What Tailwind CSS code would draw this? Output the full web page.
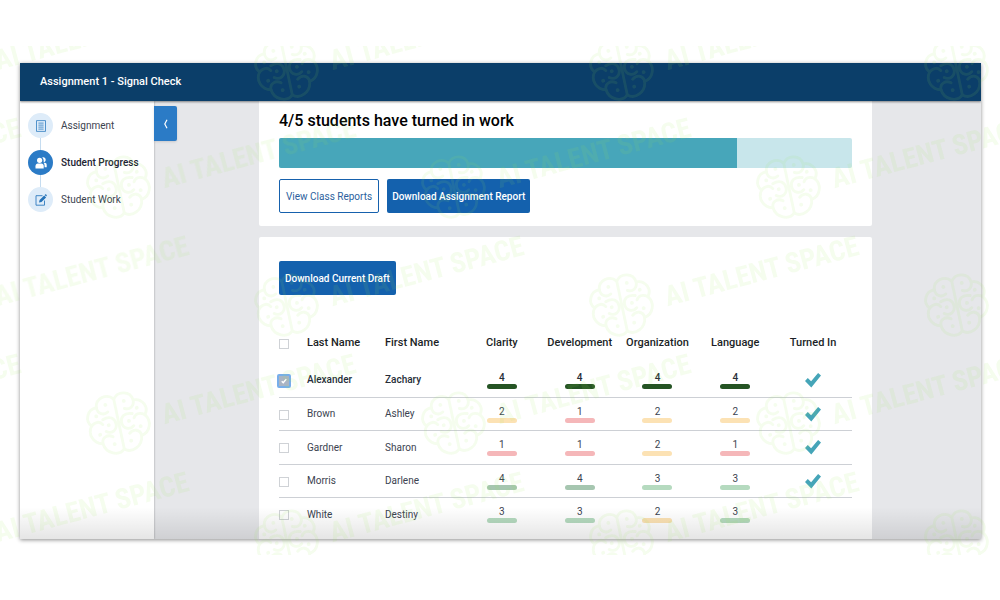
<!DOCTYPE html>
<html lang="en">
<head>
<meta charset="utf-8">
<title>Assignment 1 - Signal Check</title>
<meta name="viewport" content="width=device-width, initial-scale=1">
<script src="https://cdn.jsdelivr.net/npm/@tailwindcss/browser@4"></script>
</head>
<body class="relative min-h-screen overflow-hidden bg-white px-5 pt-[63px] font-['Roboto',sans-serif] text-[#3b4350]">

<div class="mr-[-1px] flex h-[476px] flex-col overflow-hidden bg-[#e6e7ea] shadow-[0_1px_4px_rgba(0,0,0,0.45)]">
  <header class="relative z-10 flex h-[38px] shrink-0 items-center bg-[#0b3e69] px-5 shadow-[0_1px_2px_rgba(0,0,0,0.45)]">
    <h1 class="text-[11px] font-medium text-white">Assignment 1 - Signal Check</h1>
  </header>

  <div class="relative flex min-h-0 flex-1">
    <nav class="w-[134px] shrink-0 bg-white shadow-[0_0_2px_rgba(0,0,0,0.35)]" aria-label="Assignment steps">
      <ul class="flex flex-col px-2 pt-3 text-[10px]">
        <li><a href="#assignment" class="flex items-center gap-2">
          <span class="flex size-[25px] items-center justify-center rounded-full bg-[#deecf9]">
            <svg class="size-3" viewBox="0 0 12 12" fill="none" stroke="#2f7cc0"><path d="M1.500.600h9v10.800h-9zM3.400 3.100h5.200M3.400 5.100h5.200M3.400 7.100h5.200M3.400 9.100h5.200" stroke-width=".8"/></svg>
          </span>Assignment</a></li>
        <li class="ml-3 h-3 w-px bg-[#c5dcf0]"></li>
        <li><a href="#progress" class="flex items-center gap-2 font-medium text-[#1c2433]">
          <span class="flex size-[25px] items-center justify-center rounded-full bg-[#2b7bc6]">
            <svg class="size-3" viewBox="0 0 12 12" fill="#fff"><circle cx="4.600" cy="3.300" r="2.600"/><path d="M.5 11.600V9.200c0-1.700 1-2.700 2.300-2.700h3.600c1.400 0 2.300 1 2.300 2.700v2.400z"/><path d="M7.200.600c1.700-.8 3.500.3 3.500 2.100 0 1.300-.9 2.300-2.100 2.400.3-1.600-.1-3.300-1.400-4.500zM8.700 5.700h1c1.200 0 2 .9 2 2.200v2.300H9.600V8.700c0-1.200-.4-2.300-1.200-2.900z"/></svg>
          </span>Student Progress</a></li>
        <li class="ml-3 h-3 w-px bg-[#c5dcf0]"></li>
        <li><a href="#work" class="flex items-center gap-2">
          <span class="flex size-[25px] items-center justify-center rounded-full bg-[#deecf9]">
            <svg class="size-3" viewBox="0 0 12 12"><path d="M7.500 1.700H1v9.500h8.500V6.500" fill="none" stroke="#2f7cc0" stroke-width=".9"/><path d="M4 8.600l.6-2.600 4.600-4.500 1.900 1.900-4.600 4.500zM9.700 1l.6-.6c.5-.5 1.900.8 1.400 1.400l-.6.700z" fill="#2472b8"/></svg>
          </span>Student Work</a></li>
      </ul>
    </nav>

    <button type="button" aria-label="Collapse menu" class="mt-[5px] flex h-[35px] w-[23px] shrink-0 items-center justify-center rounded-r-xs bg-[#2b7bc6] shadow-sm">
      <svg class="h-2.5 w-1.5" viewBox="0 0 6 10" fill="none" stroke="#fff" stroke-width="1.200"><path d="M4 .8 1.800 5 4 9.200"/></svg>
    </button>

    <main class="ml-[82px] mr-[109px] flex min-w-0 flex-1 flex-col gap-[11px] overflow-hidden">
      <section class="shrink-0 rounded-b-xs bg-white px-5 pt-2.5 pb-[13px]">
        <h2 class="text-base leading-5 font-medium text-black">4/5 students have turned in work</h2>
        <div role="progressbar" aria-label="Work turned in" aria-valuenow="4" aria-valuemin="0" aria-valuemax="5" class="mt-[7px] h-[30px] overflow-hidden rounded-xs bg-[#c8e6eb]">
          <div class="h-full bg-[#47a6ba]" style="width:80%"></div>
        </div>
        <div class="mt-[11px] flex gap-2 text-[10px]">
          <button type="button" class="h-[34px] rounded-xs border border-[#1661ad] bg-white px-1.5 text-[#2c5f9e]">View Class Reports</button>
          <button type="button" class="h-[34px] rounded-xs bg-[#1461ad] px-[5px] font-medium text-white">Download Assignment Report</button>
        </div>
      </section>

      <section class="min-h-0 flex-1 rounded-t-xs bg-white px-5 pt-6">
        <button type="button" class="h-[34px] rounded-xs bg-[#1461ad] px-1.5 text-[10px] font-medium text-white">Download Current Draft</button>
        <table class="mt-[30px] w-full table-fixed border-collapse text-left text-[10px]">
          <colgroup><col class="w-7"><col class="w-[78px]"><col class="w-[78px]"><col><col><col><col><col></colgroup>
          <thead>
            <tr class="h-[38px] align-top text-[11px] text-[#1c1f26] [&>th]:pt-2.5 [&>th]:font-medium">
              <th scope="col"><input type="checkbox" aria-label="Select all" class="mt-1 block size-2.5 appearance-none border border-[#cfd2d6]"></th>
              <th scope="col">Last Name</th><th scope="col">First Name</th>
              <th scope="col" class="text-center">Clarity</th><th scope="col" class="text-center">Development</th><th scope="col" class="text-center">Organization</th><th scope="col" class="text-center">Language</th><th scope="col" class="text-center">Turned In</th>
            </tr>
          </thead>
          <tbody id="rows"></tbody>
        </table>
      </section>
    </main>
    <div class="pointer-events-none absolute inset-x-0 bottom-0 h-8 bg-linear-to-b from-transparent to-black/10"></div>
  </div>
</div>

<svg class="pointer-events-none absolute inset-x-0 top-[46px] z-20 h-[509px] w-full" aria-hidden="true">
  <defs>
    <g id="brain" fill="none" stroke="#9be552" stroke-width="3" stroke-linecap="round" stroke-linejoin="round" transform="rotate(-12) scale(.94)">
      <path d="M0-27C-6-35-19-32-20-22-30-22-35-11-29-4-35 4-31 15-21 17-20 28-7 34 0 27 7 34 20 28 21 17 31 15 35 4 29-4 35-11 30-22 20-22 19-32 6-35 0-27Z"/>
      <path d="M0-27V27M-20-22C-20-15-14-12-9-15M-29-4C-24-8-19-7-17-3M-16-8C-8-11-3-7-3-1-3 6-10 9-15 5M-21 17C-21 10-14 8-9 12M20-22C20-15 14-12 9-15M29-4C24-8 19-7 17-3M16-8C8-11 3-7 3-1 3 6 10 9 15 5M21 17C21 10 14 8 9 12"/>
      <path d="M-10-23h.1M-22-13h.1M-11-1h.1M-22 7h.1M-9 20h.1M10-23h.1M22-13h.1M11-1h.1M22 7h.1M9 20h.1" stroke-width="4"/>
    </g>
    <g id="mark">
      <use href="#brain"/>
      <text x="44" y="12" transform="rotate(-15)" fill="#9be552" font-family="'Roboto Condensed','Open Sans Condensed','Liberation Sans',sans-serif" font-weight="700" font-size="28">AI TALENT SPACE</text>
    </g>
  </defs>
  <g id="marks" opacity=".1"></g>
</svg>

<script>
  const bars = { dark: 'bg-[#255424]', 4: 'bg-[#a6c6b0]', 3: 'bg-[#b5dabf]', 2: 'bg-[#fce2b4]', 1: 'bg-[#f5b7b9]' };
  const students = [
    ['Alexander', 'Zachary', [4, 4, 4, 4], true],
    ['Brown', 'Ashley', [2, 1, 2, 2], true],
    ['Gardner', 'Sharon', [1, 1, 2, 1], true],
    ['Morris', 'Darlene', [4, 4, 3, 3], true],
    ['White', 'Destiny', [3, 3, 2, 3], false]
  ];
  const tick = '<svg role="img" aria-label="Yes" class="mx-auto size-4" viewBox="0 0 16 16" fill="#45a5b8"><path d="M0 9l2.800-2.900 3.300 3.100L13.100 1 16 3.600 6.300 15.500z"/></svg>';
  document.getElementById('rows').innerHTML = students.map(([last, first, scores, done], i) => {
    const sel = i === 0;
    const box = sel
      ? '<span class="relative -ml-0.5 flex size-3.5 items-center justify-center"><input type="checkbox" checked aria-label="Select ' + last + '" class="absolute inset-0 appearance-none rounded-xs border-2 border-[#77aeea] bg-[#a9b4c4]"><svg class="relative size-1.5" viewBox="0 0 8 8" fill="none" stroke="#fff" stroke-width="2"><path d="M1 4.300l2 2L7 1.500"/></svg></span>'
      : '<input type="checkbox" aria-label="Select ' + last + '" class="block size-2.5 appearance-none border border-[#cfd2d6]">';
    return '<tr class="border-b border-[#cdd0d5] odd:h-[34px] even:h-[33px] last:border-0 ' + (sel ? 'font-medium text-[#262d38]' : '') + '">' +
      '<td class="pt-0.5">' + box + '</td><td>' + last + '</td><td>' + first + '</td>' +
      scores.map(s => '<td><div class="flex flex-col items-center pt-px"><span class="leading-3">' + s + '</span><span class="h-[5px] w-[30px] rounded-full ' + (sel ? bars.dark : bars[s]) + '"></span></div></td>').join('') +
      '<td>' + (done ? tick : '') + '</td></tr>';
  }).join('');

  let marks = '';
  for (let r = 0; r < 6; r++)
    for (let c = -1; c < 8; c++)
      marks += '<use href="#mark" x="' + (c * 335 - 48 + (r % 2 ? 167 : 0)) + '" y="' + (24 + r * 118) + '"/>';
  document.getElementById('marks').innerHTML = marks;
</script>
</body>
</html>
